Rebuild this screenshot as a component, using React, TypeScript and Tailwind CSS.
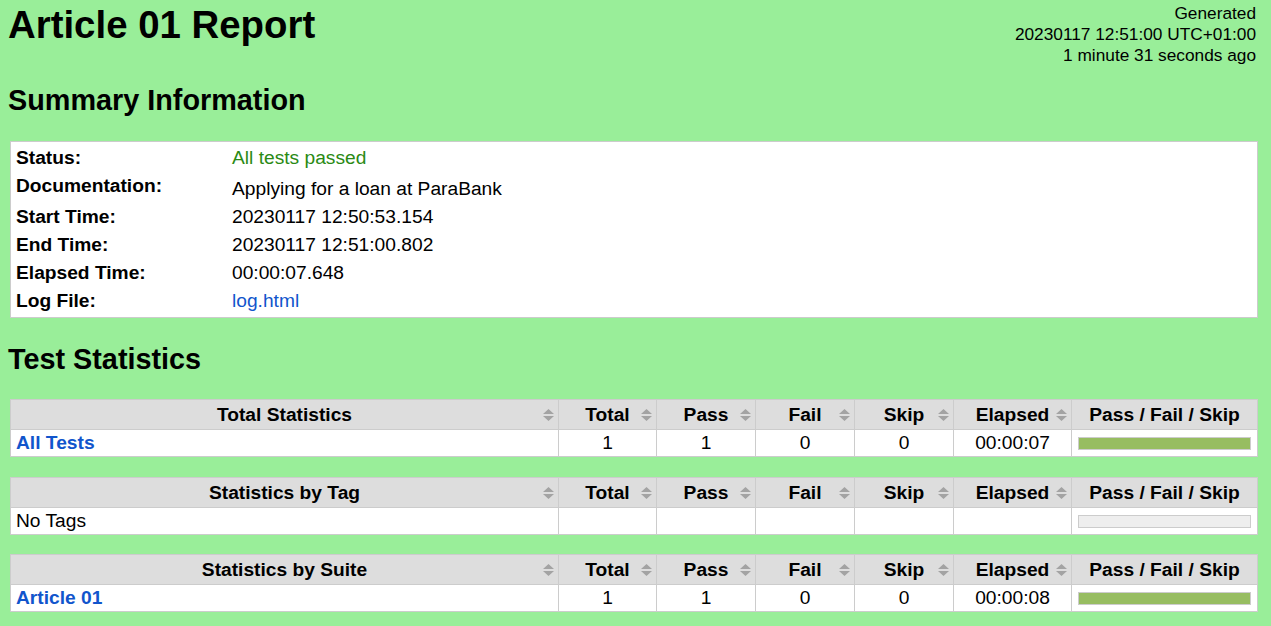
import React from "react"

type StatRow = {
  name: string
  link?: boolean
  total?: string
  pass?: string
  fail?: string
  skip?: string
  elapsed?: string
  passed: boolean
}

const summary = [
  { label: "Status:", value: "All tests passed", kind: "pass" },
  { label: "Documentation:", value: "Applying for a loan at ParaBank", kind: "doc" },
  { label: "Start Time:", value: "20230117 12:50:53.154" },
  { label: "End Time:", value: "20230117 12:51:00.802" },
  { label: "Elapsed Time:", value: "00:00:07.648" },
  { label: "Log File:", value: "log.html", kind: "link" },
]

const columns = ["Total", "Pass", "Fail", "Skip", "Elapsed"]

function SortIcon() {
  return (
    <svg
      width="11"
      height="12"
      viewBox="0 0 11 12"
      className="absolute right-[4px] top-1/2 -translate-y-1/2"
    >
      <path d="M0 5 L5.5 0 L11 5 Z M0 7 L5.5 12 L11 7 Z" fill="#a3a3a3" />
    </svg>
  )
}

function StatsTable({ title, row, className = "" }: { title: string; row: StatRow; className?: string }) {
  const values = [row.total, row.pass, row.fail, row.skip, row.elapsed]
  return (
    <div className={`ml-[2px] mr-[5px] border border-[#ccc] bg-white ${className}`}>
      {/* header */}
      <div className="grid h-[30px] grid-cols-[1fr_98px_99px_99px_99px_118px_186px] border-b border-[#ccc] bg-[#ddd] font-bold">
        <div className="relative flex items-center justify-center">
          {title}
          <SortIcon />
        </div>
        {columns.map((c) => (
          <div key={c} className="relative flex items-center justify-center border-l border-[#ccc]">
            {c}
            <SortIcon />
          </div>
        ))}
        <div className="flex items-center justify-center border-l border-[#ccc]">Pass / Fail / Skip</div>
      </div>
      {/* data row */}
      <div className="grid h-[26px] grid-cols-[1fr_98px_99px_99px_99px_118px_186px]">
        <div className={`flex items-center px-[5px] ${row.link ? "font-bold text-[#15c]" : ""}`}>{row.name}</div>
        {values.map((v, i) => (
          <div key={i} className="flex items-center justify-center border-l border-[#ccc]">
            {v}
          </div>
        ))}
        <div className="flex items-center border-l border-[#ccc] px-[6px]">
          <div
            className={`h-[13px] w-full border border-[#ccc] ${row.passed ? "bg-[#97bd61]" : "bg-[#eee]"}`}
          />
        </div>
      </div>
    </div>
  )
}

export default function App() {
  return (
    <div className="min-h-screen bg-[#9e9] px-[8px] font-['Liberation_Sans',Arial,Helvetica,sans-serif] text-[19.2px] leading-[22px] text-black">
      {/* Header */}
      <div className="flex items-start justify-between">
        <h1 className="mt-[3px] text-[38.4px] leading-[44px] font-bold">Article 01 Report</h1>
        <div className="mt-[3px] mr-[7px] text-right text-[17.28px] leading-[21px]">
          <div>Generated</div>
          <div>20230117 12:51:00 UTC+01:00</div>
          <div>1 minute 31 seconds ago</div>
        </div>
      </div>

      {/* Summary */}
      <h2 className="mt-[18px] text-[28.8px] leading-[33px] font-bold">Summary Information</h2>
      <div className="mt-[24px] ml-[2px] mr-[5px] border border-[#ccc] bg-white pt-[1px] pb-[3px]">
        {summary.map((s) => (
          <div
            key={s.label}
            className={`grid grid-cols-[216px_1fr] ${s.kind === "doc" ? "h-[31px]" : "h-[28px]"}`}
          >
            <div className="px-[5px] pt-[4px] font-bold">{s.label}</div>
            <div
              className={`px-[5px] ${s.kind === "doc" ? "pt-[7px]" : "pt-[4px]"} ${
                s.kind === "pass" ? "text-[#2a8a14]" : s.kind === "link" ? "text-[#15c]" : ""
              }`}
            >
              {s.value}
            </div>
          </div>
        ))}
      </div>

      {/* Test Statistics */}
      <h2 className="mt-[25px] text-[28.8px] leading-[33px] font-bold">Test Statistics</h2>
      <StatsTable
        className="mt-[23px]"
        title="Total Statistics"
        row={{ name: "All Tests", link: true, total: "1", pass: "1", fail: "0", skip: "0", elapsed: "00:00:07", passed: true }}
      />
      <StatsTable className="mt-[20px]" title="Statistics by Tag" row={{ name: "No Tags", passed: false }} />
      <StatsTable
        className="mt-[19px]"
        title="Statistics by Suite"
        row={{ name: "Article 01", link: true, total: "1", pass: "1", fail: "0", skip: "0", elapsed: "00:00:08", passed: true }}
      />
    </div>
  )
}
